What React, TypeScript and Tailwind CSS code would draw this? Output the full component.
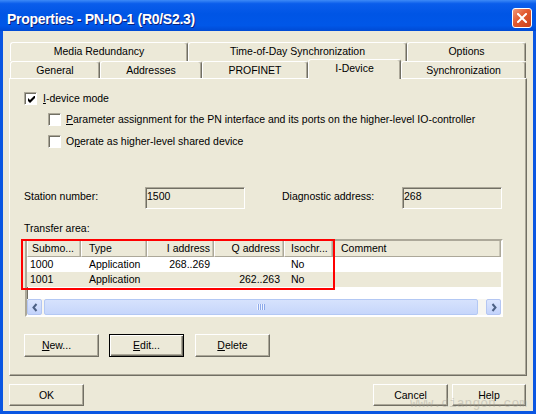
import type { ReactNode } from 'react'

const FONT = "font-['Liberation_Sans',Arial,sans-serif] text-[10.5px] leading-[13px] text-black"

const TOP_TABS = [
  { label: 'Media Redundancy', w: 'w-[178px]' },
  { label: 'Time-of-Day Synchronization', w: 'w-[219px]' },
  { label: 'Options', w: 'w-[119px]' },
]

const BOTTOM_TABS = [
  { label: 'General', w: 'w-[90px]', active: false },
  { label: 'Addresses', w: 'w-[102px]', active: false },
  { label: 'PROFINET', w: 'w-[106px]', active: false },
  { label: 'I-Device', w: 'w-[93px]', active: true },
  { label: 'Synchronization', w: 'w-[125px]', active: false },
]

const COLS = [
  { label: 'Submo...', w: 'w-[54px]', head: 'pl-[4px]', cell: 'pl-[3px]' },
  { label: 'Type', w: 'w-[66px]', head: 'pl-[7px]', cell: 'pl-[8px]' },
  { label: 'I address', w: 'w-[67px]', head: 'justify-end pr-[3px]', cell: 'justify-end pr-[4px]' },
  { label: 'Q address', w: 'w-[70px]', head: 'justify-end pr-[3px]', cell: 'justify-end pr-[4px]' },
  { label: 'Isochr...', w: 'w-[49px]', head: 'pl-[6px]', cell: 'pl-[7px]' },
  { label: 'Comment', w: 'flex-1', head: 'pl-[7px]', cell: 'pl-[8px]' },
]

const ROWS = [
  { bg: 'bg-white', cells: ['1000', 'Application', '268..269', '', 'No', ''] },
  { bg: 'bg-[#ECE9D8]', cells: ['1001', 'Application', '', '262..263', 'No', ''] },
]

function U({ children }: { children: ReactNode }) {
  return <span className="underline decoration-1 underline-offset-[1px]">{children}</span>
}

function Checkbox({ checked }: { checked?: boolean }) {
  return (
    <span className="flex h-[13px] w-[13px] shrink-0 items-center justify-center border border-t-[#ACA899] border-l-[#ACA899] border-r-white border-b-white bg-white shadow-[inset_1px_1px_0_#716F64]">
      {checked && (
        <svg width="7" height="7" viewBox="0 0 7 7" className="ml-[1px] mt-[1px]">
          <path d="M0 2 L2 4 L7 -1 L7 2 L2 7 L0 5 Z" fill="#000" />
        </svg>
      )}
    </span>
  )
}

function Field({ value }: { value: string }) {
  return (
    <div className="h-[22px] w-[100px] border border-t-[#ACA899] border-l-[#ACA899] border-r-white border-b-white bg-[#ECE9D8] pl-[1px] pt-[2px] shadow-[inset_1px_1px_0_#716F64]">
      {value}
    </div>
  )
}

function Button({ children, def, w = 'w-[75px]', h = 'h-[23px]', extra = '' }: { children: ReactNode; def?: boolean; w?: string; h?: string; extra?: string }) {
  const frame = def
    ? 'border border-black shadow-[inset_1px_1px_0_#fff,inset_-1px_-1px_0_#716F64,inset_-2px_-2px_0_#ACA899]'
    : 'border border-t-white border-l-white border-r-[#716F64] border-b-[#716F64] shadow-[inset_-1px_-1px_0_#ACA899]'
  return (
    <div className={`flex shrink-0 items-center justify-center bg-[#ECE9D8] ${w} ${h} ${frame} ${extra}`}>
      {children}
    </div>
  )
}

function ScrollArrow({ dir }: { dir: 'left' | 'right' }) {
  return (
    <div className="flex h-[16px] w-[15px] shrink-0 items-center justify-center rounded-[2px] border border-[#B4C6F2] bg-[linear-gradient(to_bottom,#DCE6FE,#C3D3FB)]">
      <svg width="6" height="9" viewBox="0 0 6 9">
        <path d={dir === 'left' ? 'M4.5 1 L1.5 4.5 L4.5 8' : 'M1.5 1 L4.5 4.5 L1.5 8'} fill="none" stroke="#4D6185" strokeWidth="2" />
      </svg>
    </div>
  )
}

export default function App() {
  return (
    <div className={`relative flex h-[414px] w-[536px] flex-col overflow-hidden bg-[#0A56E2] ${FONT}`}>
      {/* title bar */}
      <div className="flex h-[31px] shrink-0 items-start justify-between bg-[linear-gradient(to_bottom,#3D8AF7_0%,#0A5DEB_12%,#0055E5_45%,#0057E8_82%,#004AD4_100%)] pl-[7px] pr-[4px]">
        <span className="mt-[11px] font-['Liberation_Sans',Arial,sans-serif] text-[14px] font-bold leading-[16px] tracking-[-0.3px] text-white [text-shadow:1px_1px_0_#0A1E7A]">
          Properties - PN-IO-1 (R0/S2.3)
        </span>
        <div className="mt-[8px] flex h-[20px] w-[20px] items-center justify-center rounded-[3px] border border-white bg-[linear-gradient(135deg,#F0997A_0%,#E2592F_45%,#C8411B_100%)]">
          <svg width="10" height="10" viewBox="0 0 10 10">
            <path d="M1 1 L9 9 M9 1 L1 9" stroke="#fff" strokeWidth="2" strokeLinecap="square" />
          </svg>
        </div>
      </div>

      {/* dialog body */}
      <div className="mx-[3px] mb-[3px] flex flex-1 flex-col bg-[#ECE9D8]">
        <div className="ml-[7px] mt-[11px] flex">
          {TOP_TABS.map((t) => (
            <div
              key={t.label}
              className={`${t.w} flex h-[19px] items-center justify-center rounded-t-[3px] border-l border-r border-t border-l-white border-r-[#716F64] border-t-white pb-[1px] shadow-[inset_-1px_0_0_#ACA899]`}
            >
              {t.label}
            </div>
          ))}
        </div>
        <div className="ml-[7px] flex h-[17px] items-end">
          {BOTTOM_TABS.map((t) =>
            t.active ? (
              <div
                key={t.label}
                className={`${t.w} relative z-10 -mb-[1px] flex h-[20px] shrink-0 items-center justify-center rounded-t-[3px] border-l border-r border-t border-l-white border-r-[#716F64] border-t-white bg-[#ECE9D8] pb-[3px] shadow-[inset_-1px_0_0_#ACA899]`}
              >
                {t.label}
              </div>
            ) : (
              <div
                key={t.label}
                className={`${t.w} flex h-[17px] shrink-0 items-center justify-center rounded-t-[3px] border-l border-r border-t border-l-white border-r-[#716F64] border-t-white bg-[#ECE9D8] shadow-[inset_-1px_0_0_#ACA899]`}
              >
                {t.label}
              </div>
            ),
          )}
        </div>

        {/* tab page */}
        <div className="mx-[6px] flex h-[298px] shrink-0 flex-col border border-b-[#716F64] border-l-white border-r-[#716F64] border-t-white shadow-[inset_-1px_-1px_0_#ACA899]">
          <div className="ml-[14px] mt-[13px] flex h-[13px] items-center gap-[6px]">
            <Checkbox checked />
            <span>
              <U>I</U>-device mode
            </span>
          </div>
          <div className="ml-[38px] mt-[8px] flex h-[13px] items-center gap-[5px]">
            <Checkbox />
            <span>
              <U>P</U>arameter assignment for the PN interface and its ports on the higher-level IO-controller
            </span>
          </div>
          <div className="ml-[38px] mt-[9px] flex h-[13px] items-center gap-[5px]">
            <Checkbox />
            <span>
              O<U>p</U>erate as higher-level shared device
            </span>
          </div>

          <div className="ml-[14px] mt-[39px] flex items-start">
            <span className="mt-[3px] w-[121px]">Station number:</span>
            <Field value="1500" />
            <span className="ml-[37px] mt-[3px] w-[120px]">Diagnostic address:</span>
            <Field value="268" />
          </div>

          <span className="ml-[14px] mt-[13px]">Transfer area:</span>

          {/* list view */}
          <div className="relative ml-[15px] mt-[4px] h-[78px] w-[478px]">
            <div className="flex h-full w-full flex-col border-2 border-b-white border-l-[#ACA899] border-r-white border-t-[#ACA899] bg-white shadow-[inset_1px_1px_0_#716F64]">
              <div className="flex h-[16px] shrink-0">
                {COLS.map((c) => (
                  <div
                    key={c.label}
                    className={`${c.w} ${c.head} flex items-center overflow-hidden whitespace-nowrap border-b border-l border-r border-b-[#ACA899] border-l-white border-r-[#ACA899] bg-[#ECE9D8] shadow-[inset_-1px_0_0_#C9C6B6]`}
                  >
                    {c.label}
                  </div>
                ))}
              </div>
              {ROWS.map((r) => (
                <div key={r.cells[0]} className={`flex h-[15px] shrink-0 ${r.bg}`}>
                  {COLS.map((c, i) => (
                    <div key={c.label} className={`${c.w} ${c.cell} flex items-center whitespace-nowrap`}>
                      {r.cells[i]}
                    </div>
                  ))}
                </div>
              ))}
              <div className="flex-1" />
              <div className="flex h-[16px] shrink-0 items-center bg-[#F7F6F1]">
                <ScrollArrow dir="left" />
                <div className="ml-[2px] flex h-[16px] w-[434px] items-center justify-center rounded-[2px] border border-[#B3C8F4] bg-[linear-gradient(to_bottom,#D6E2FD,#C6D6FB)]">
                  <svg width="8" height="6" viewBox="0 0 8 6">
                    <path d="M0.5 0 V6 M2.5 0 V6 M4.5 0 V6 M6.5 0 V6" stroke="#EEF3FF" strokeWidth="1" />
                    <path d="M1.5 0 V6 M3.5 0 V6 M5.5 0 V6 M7.5 0 V6" stroke="#8CA9EA" strokeWidth="1" />
                  </svg>
                </div>
                <div className="w-[8px]" />
                <ScrollArrow dir="right" />
              </div>
            </div>
            <div className="absolute -left-[4px] top-0 h-[51px] w-[314px] border-2 border-[#FF0000]" />
          </div>

          <div className="ml-[14px] mt-[17px] flex gap-[10px]">
            <Button extra="pr-[10px]">
              <span>
                <U>N</U>ew...
              </span>
            </Button>
            <Button def>
              <span>
                <U>E</U>dit...
              </span>
            </Button>
            <Button extra="ml-[1px]">
              <span>
                <U>D</U>elete
              </span>
            </Button>
          </div>
        </div>

        <div className="mt-[8px] flex items-start px-[6px]">
          <Button h="h-[22px]">OK</Button>
          <div className="flex-1" />
          <Button h="h-[22px]">Cancel</Button>
          <Button h="h-[22px]" w="w-[74px]" extra="ml-[4px] mr-[1px]">
            Help
          </Button>
        </div>
      </div>

      <span className="absolute left-[410px] top-[397px] font-['Liberation_Mono',monospace] text-[13px] leading-[14px] text-[#9E9C92] opacity-40">
        www.diangon.com
      </span>
    </div>
  )
}
